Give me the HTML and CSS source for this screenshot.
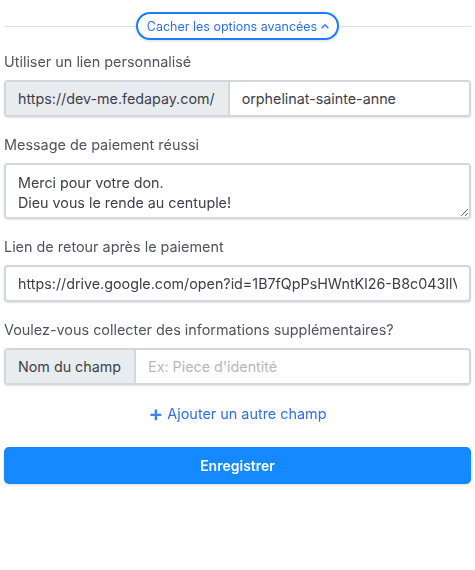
FILE: index.html
```html
<!DOCTYPE html>
<html lang="fr">
<head>
  <meta charset="UTF-8">
  <title>Options avancées</title>
  <link rel="stylesheet" href="styles.css">
</head>
<body>
  <div class="advanced">
    <div class="divider">
      <button class="toggle" type="button">
        Cacher les options avancées
        <svg class="chevron" viewBox="0 0 10 6" width="8" height="6">
          <path d="M1.5 5 L5 1.5 L8.5 5" fill="none" stroke="currentColor" stroke-width="2" stroke-linecap="round" stroke-linejoin="round"/>
        </svg>
      </button>
    </div>

    <div class="form-group">
      <label>Utiliser un lien personnalisé</label>
      <div class="input-group">
        <span class="addon">https://dev-me.fedapay.com/</span>
        <input type="text" value="orphelinat-sainte-anne">
      </div>
    </div>

    <div class="form-group">
      <label>Message de paiement réussi</label>
      <textarea rows="2">Merci pour votre don.
Dieu vous le rende au centuple!</textarea>
    </div>

    <div class="form-group">
      <label>Lien de retour après le paiement</label>
      <input class="single" type="text" value="https://drive.google.com/open?id=1B7fQpPsHWntKl26-B8c043IlVq8xYz">
    </div>

    <div class="form-group">
      <label>Voulez-vous collecter des informations supplémentaires?</label>
      <div class="input-group">
        <span class="addon">Nom du champ</span>
        <input type="text" placeholder="Ex: Piece d'identité">
      </div>
    </div>

    <a href="#" class="add-field"><span class="plus">+</span> Ajouter un autre champ</a>

    <button class="save" type="submit">Enregistrer</button>
  </div>
</body>
</html>
```

FILE: styles.css
```css
body {
  margin: 0;
  padding: 12px 4px;
  font-family: 'Inter', 'Noto Sans', sans-serif;
  background: #fff;
}

.divider {
  display: flex;
  align-items: center;
  justify-content: center;
  margin-bottom: 12px;
}

.divider::before,
.divider::after {
  content: "";
  flex: 1;
  height: 1px;
  background-color: #dde0e4;
}

.toggle {
  display: flex;
  align-items: center;
  gap: 4px;
  height: 28px;
  padding: 0 8px 0 9px;
  font-family: inherit;
  font-size: 12.5px;
  color: #2f6fe8;
  background: #fff;
  border: 2px solid #1a7dff;
  border-radius: 14px;
  box-shadow: 0 1px 3px rgba(0, 0, 0, 0.15);
  cursor: pointer;
}

.chevron {
  color: #3b82f6;
  margin-top: -1px;
}

.form-group {
  margin-bottom: 18px;
}

label {
  display: block;
  font-size: 14.4px;
  line-height: 20px;
  color: #4f5462;
  margin-bottom: 8px;
}

.input-group {
  display: flex;
  box-sizing: border-box;
  height: 37px;
  border: 2px solid #d3d6dc;
  border-radius: 4px;
  box-shadow: 0 1px 2px rgba(0, 0, 0, 0.12);
  overflow: hidden;
}

.addon {
  display: flex;
  align-items: center;
  padding: 0 13px 0 12px;
  font-size: 14.3px;
  color: #3c404c;
  background-color: #e9ecef;
  border-right: 2px solid #d3d6dc;
  white-space: nowrap;
}

.input-group input {
  flex: 1;
  min-width: 0;
  border: none;
  padding: 0 12px;
}

input, textarea {
  font-family: inherit;
  font-size: 14.3px;
  color: #3c404c;
  outline: none;
}

input::placeholder {
  color: #b5b8be;
}

.single {
  display: block;
  box-sizing: border-box;
  width: 100%;
  height: 37px;
  padding: 0 12px;
  border: 2px solid #d3d6dc;
  border-radius: 4px;
  box-shadow: 0 1px 2px rgba(0, 0, 0, 0.12);
}

textarea {
  display: block;
  box-sizing: border-box;
  width: 100%;
  height: 56px;
  padding: 8px 12px;
  line-height: 20px;
  border: 2px solid #d3d6dc;
  border-radius: 4px;
  box-shadow: 0 1px 2px rgba(0, 0, 0, 0.12);
  resize: vertical;
}

.add-field {
  display: block;
  text-align: center;
  font-size: 14.4px;
  line-height: 20px;
  color: #2f6fe8;
  text-decoration: none;
  margin: 0 0 23px;
}

.plus {
  font-size: 22px;
  font-weight: 600;
  color: #3b82f6;
  vertical-align: -2px;
}

.save {
  display: block;
  width: 100%;
  height: 37px;
  font-family: inherit;
  font-size: 14px;
  font-weight: 600;
  color: #fff;
  background-color: #1589ff;
  border: none;
  border-radius: 5px;
  box-shadow: 0 1px 3px rgba(0, 0, 0, 0.15);
  cursor: pointer;
}
```
